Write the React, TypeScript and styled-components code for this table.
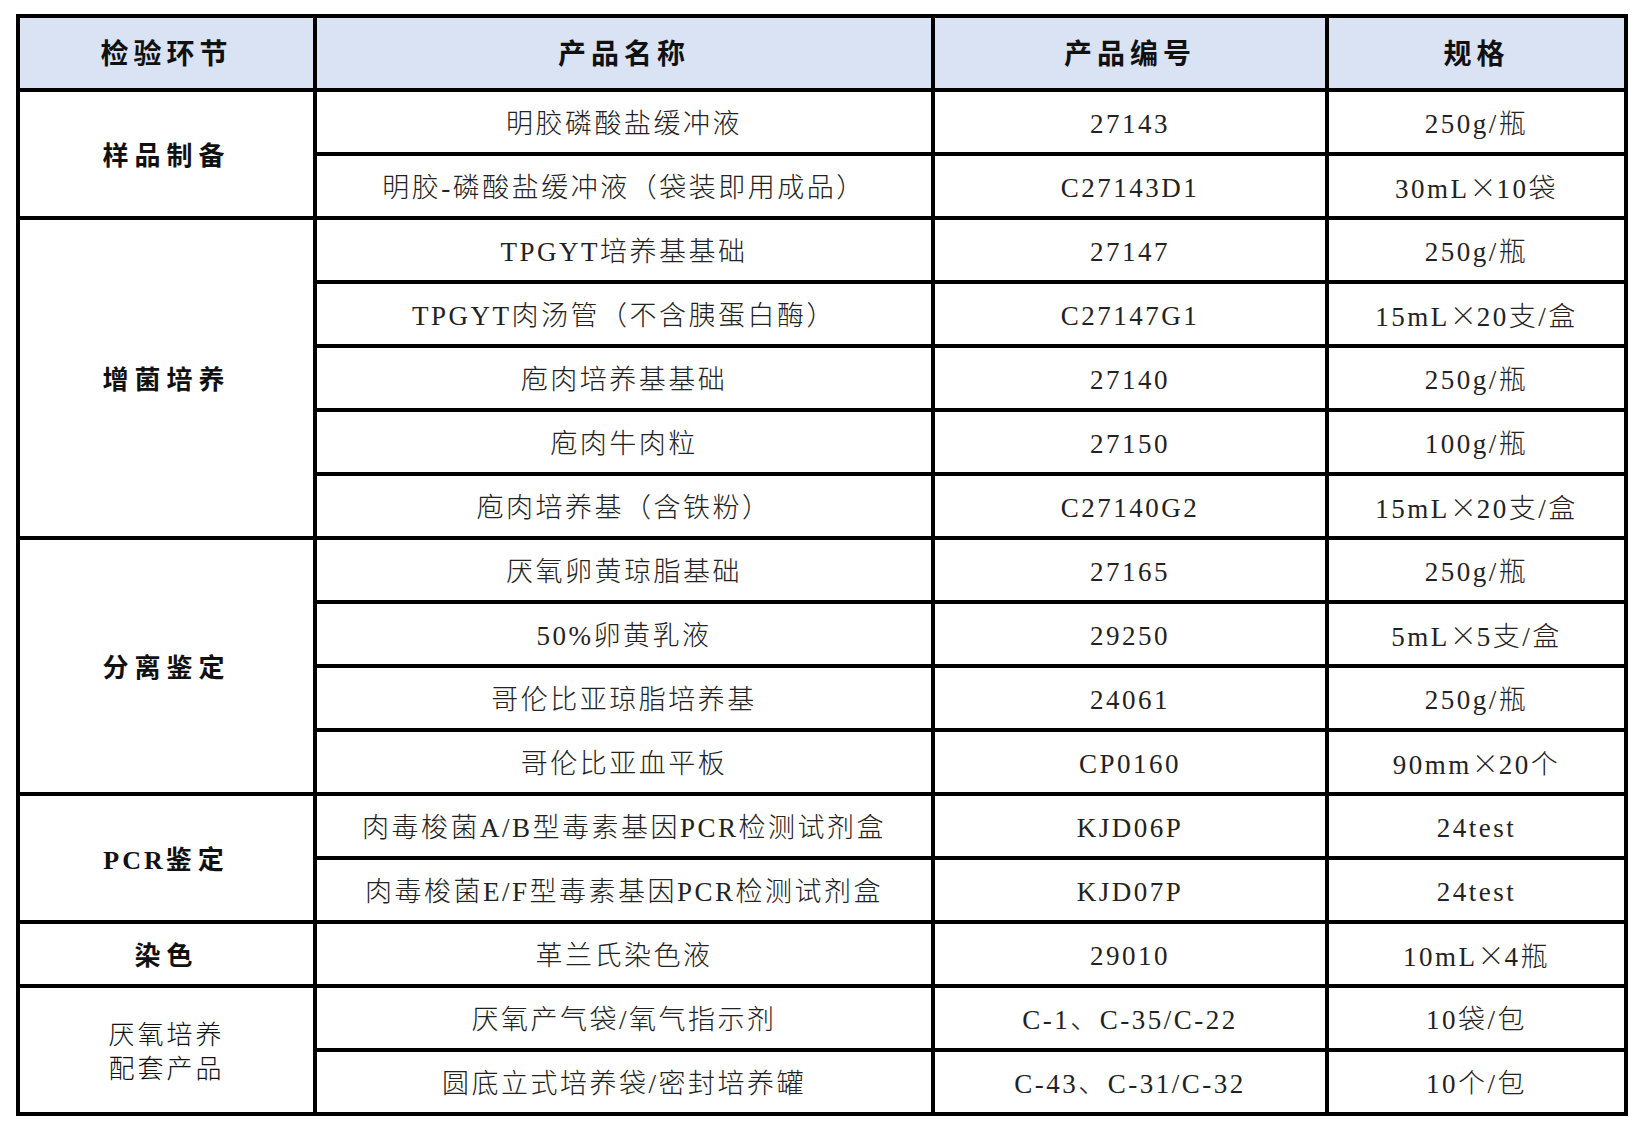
import React from "react";
import styled, { createGlobalStyle } from "styled-components";

const GlobalStyle = createGlobalStyle`
  html, body {
    margin: 0;
    padding: 0;
    background: #ffffff;
  }
  body {
    padding: 14px 16px;
    font-family: "Liberation Serif", "Noto Sans CJK SC", serif;
    color: #1c1c1c;
  }
`;

const Table = styled.table`
  border-collapse: collapse;
  width: 1608px;
  table-layout: fixed;
  border: 4px solid #000;
`;

const HeadCell = styled.th`
  background: #dae3f3;
  border: 4px solid #000;
  height: 66px;
  padding: 4px 0 0;
  font-size: 28px;
  line-height: 34px;
  font-weight: 700;
  letter-spacing: 5px;
  text-align: center;
  vertical-align: middle;
  color: #111;
`;

const GroupCell = styled.td<{ $bold?: boolean }>`
  border: 4px solid #000;
  padding: 6px 0 0;
  text-align: center;
  vertical-align: middle;
  font-size: 26px;
  font-weight: ${(p) => (p.$bold ? 700 : 300)};
  letter-spacing: ${(p) => (p.$bold ? "6px" : "3px")};
  line-height: 34px;
  color: #111;
`;

const Cell = styled.td`
  border: 4px solid #000;
  height: 56px;
  padding: 4px 0 0;
  text-align: center;
  vertical-align: middle;
  font-size: 27px;
  font-weight: 300;
  line-height: 32px;
  letter-spacing: 2.5px;
  white-space: nowrap;
  color: #222;
`;

const Wide = styled.span`
  font-family: "Noto Sans CJK SC", sans-serif;
  font-weight: 300;
  letter-spacing: 0;
`;

const Narrow = styled.span`
  letter-spacing: 3px;
`;

interface Item {
  name: string;
  code: string;
  spec: string;
}

interface Group {
  label: string[];
  bold: boolean;
  items: Item[];
}

const groups: Group[] = [
  {
    label: ["样品制备"],
    bold: true,
    items: [
      { name: "明胶磷酸盐缓冲液", code: "27143", spec: "250g/瓶" },
      { name: "明胶-磷酸盐缓冲液（袋装即用成品）", code: "C27143D1", spec: "30mL×10袋" },
    ],
  },
  {
    label: ["增菌培养"],
    bold: true,
    items: [
      { name: "TPGYT培养基基础", code: "27147", spec: "250g/瓶" },
      { name: "TPGYT肉汤管（不含胰蛋白酶）", code: "C27147G1", spec: "15mL×20支/盒" },
      { name: "庖肉培养基基础", code: "27140", spec: "250g/瓶" },
      { name: "庖肉牛肉粒", code: "27150", spec: "100g/瓶" },
      { name: "庖肉培养基（含铁粉）", code: "C27140G2", spec: "15mL×20支/盒" },
    ],
  },
  {
    label: ["分离鉴定"],
    bold: true,
    items: [
      { name: "厌氧卵黄琼脂基础", code: "27165", spec: "250g/瓶" },
      { name: "50%卵黄乳液", code: "29250", spec: "5mL×5支/盒" },
      { name: "哥伦比亚琼脂培养基", code: "24061", spec: "250g/瓶" },
      { name: "哥伦比亚血平板", code: "CP0160", spec: "90mm×20个" },
    ],
  },
  {
    label: ["PCR鉴定"],
    bold: true,
    items: [
      { name: "肉毒梭菌A/B型毒素基因PCR检测试剂盒", code: "KJD06P", spec: "24test" },
      { name: "肉毒梭菌E/F型毒素基因PCR检测试剂盒", code: "KJD07P", spec: "24test" },
    ],
  },
  {
    label: ["染色"],
    bold: true,
    items: [{ name: "革兰氏染色液", code: "29010", spec: "10mL×4瓶" }],
  },
  {
    label: ["厌氧培养", "配套产品"],
    bold: false,
    items: [
      { name: "厌氧产气袋/氧气指示剂", code: "C-1、C-35/C-22", spec: "10袋/包" },
      { name: "圆底立式培养袋/密封培养罐", code: "C-43、C-31/C-32", spec: "10个/包" },
    ],
  },
];

// the multiplication sign is the full-width one in the original
const renderSpec = (spec: string) =>
  spec.split("×").map((part, i) => (
    <React.Fragment key={i}>
      {i > 0 && <Wide>×</Wide>}
      {part}
    </React.Fragment>
  ));

const renderLabel = (label: string) =>
  label.startsWith("PCR") ? (
    <>
      <Narrow>PCR</Narrow>
      {label.slice(3)}
    </>
  ) : (
    label
  );

export default function App() {
  return (
    <>
      <GlobalStyle />
      <Table>
        <colgroup>
          <col style={{ width: 297 }} />
          <col style={{ width: 618 }} />
          <col style={{ width: 394 }} />
          <col style={{ width: 299 }} />
        </colgroup>
        <thead>
          <tr>
            <HeadCell>检验环节</HeadCell>
            <HeadCell>产品名称</HeadCell>
            <HeadCell>产品编号</HeadCell>
            <HeadCell>规格</HeadCell>
          </tr>
        </thead>
        <tbody>
          {groups.map((g) =>
            g.items.map((it, i) => (
              <tr key={g.label.join("") + i}>
                {i === 0 && (
                  <GroupCell rowSpan={g.items.length} $bold={g.bold}>
                    {g.label.map((l, k) => (
                      <div key={k}>{renderLabel(l)}</div>
                    ))}
                  </GroupCell>
                )}
                <Cell>{it.name}</Cell>
                <Cell>{it.code}</Cell>
                <Cell>{renderSpec(it.spec)}</Cell>
              </tr>
            ))
          )}
        </tbody>
      </Table>
    </>
  );
}
